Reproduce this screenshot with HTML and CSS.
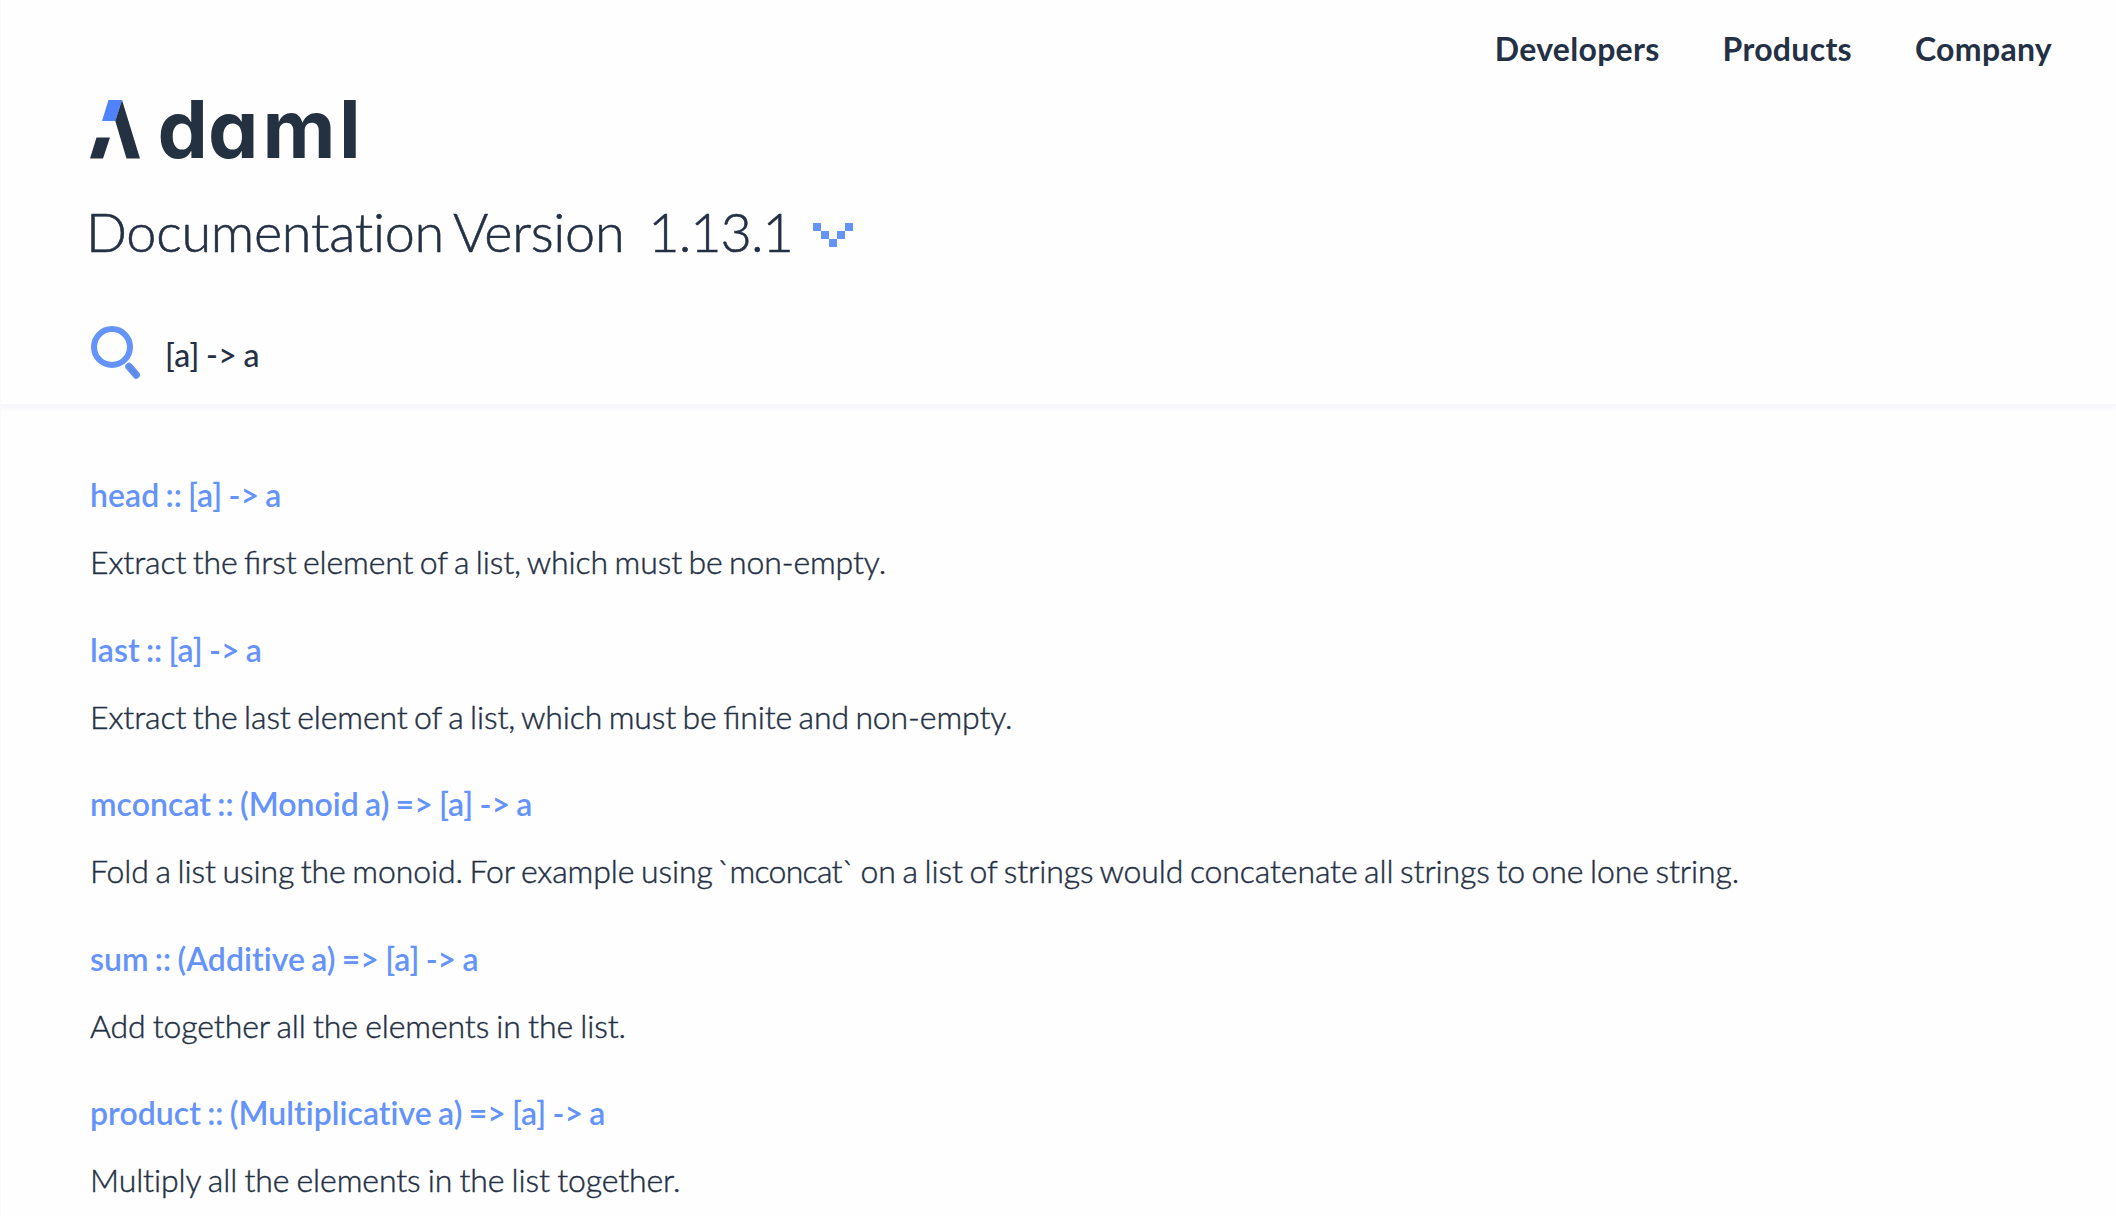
FILE: index.html
```html
<!DOCTYPE html>
<html lang="en">
<head>
<meta charset="utf-8">
<title>Daml Documentation</title>
<link rel="stylesheet" href="styles.css">
</head>
<body>
<div class="page">
  <header class="header">
    <nav class="nav">
      <a class="nav-link">Developers</a>
      <a class="nav-link">Products</a>
      <a class="nav-link">Company</a>
    </nav>
    <svg class="logo" viewBox="0 0 280 100" role="img" aria-label="daml">
      <path fill="#4f82fc" d="M18.5 20H32L25.3 41H12z"/>
      <path fill="#243141" d="M6.5 57.5H20L13 78.5H0zM32 20L50 78.5H36.5L25.3 41z"/>
      <text class="wordmark" y="78.3" x="67.5 118 172.5 249">daml</text>
    </svg>
    <div class="title-row">
      <h1 class="title">Documentation Version</h1>
      <span class="version">1.13.1</span>
      <svg class="chevron" viewBox="0 0 40 24" shape-rendering="crispEdges">
        <path fill="#6493fb" d="M0 0h8v8H0zM8 8h8v8H8zM16 16h8v8h-8zM24 8h8v8h-8zM32 0h8v8h-8z"/>
      </svg>
    </div>
    <div class="search">
      <svg class="search-icon" viewBox="0 0 52 56" fill="none">
        <circle cx="22" cy="22" r="18" stroke="#6493fb" stroke-width="6"/>
        <path d="M39 41.5L46.3 50" stroke="#6493fb" stroke-width="7.5" stroke-linecap="round"/>
        <path d="M39 41.5L46.3 50" stroke="#5e8be4" stroke-width="4.5" stroke-linecap="round"/>
      </svg>
      <span class="query">[a] -&gt; a</span>
    </div>
  </header>
  <main class="results">
    <article class="result"><a class="signature">head :: [a] -&gt; a</a><p class="description ligatures">Extract the first element of a list, which must be non-empty.</p></article>
    <article class="result"><a class="signature">last :: [a] -&gt; a</a><p class="description ligatures">Extract the last element of a list, which must be finite and non-empty.</p></article>
    <article class="result"><a class="signature">mconcat :: (Monoid a) =&gt; [a] -&gt; a</a><p class="description">Fold a list using the monoid. For example using <span class="code">`mconcat`</span> on a list of strings would concatenate all strings to one lone string.</p></article>
    <article class="result"><a class="signature">sum :: (Additive a) =&gt; [a] -&gt; a</a><p class="description loose">Add together all the elements in the list.</p></article>
    <article class="result"><a class="signature">product :: (Multiplicative a) =&gt; [a] -&gt; a</a><p class="description loose">Multiply all the elements in the list together.</p></article>
  </main>
</div>
</body>
</html>
```
FILE: styles.css
```css
* { box-sizing: border-box; }
body {
  margin: 0;
  height: 1216px;
  overflow: hidden;
  background: #fefefe;
  color: #243044;
  font-family: Lato, sans-serif;
  font-size: 32px;
}
.page { border-left: 1px solid #fafafb; height: 1216px; }
.header {
  height: 404px;
  padding-left: 89px;
  display: flex;
  flex-direction: column;
  align-items: flex-start;
}
.nav {
  align-self: stretch;
  height: 80px;
  padding: 29px 64px 0 0;
  display: flex;
  justify-content: flex-end;
  gap: 63px;
}
.nav-link {
  font-weight: 700;
  line-height: 40px;
  height: 40px;
  letter-spacing: 0.3px;
}
.logo { width: 280px; height: 100px; display: block; }
.wordmark {
  font-family: Inter, sans-serif;
  font-feature-settings: "cv11";
  font-weight: 700;
  font-size: 80px;
  fill: #243141;
}
.title-row { display: flex; height: 90px; padding-top: 19px; margin-left: -4px; }
.title, .version {
  margin: 0;
  font-size: 54px;
  font-weight: 300;
  line-height: 66px;
  white-space: nowrap;
  -webkit-text-stroke: 0.6px #243044;
}
.title { letter-spacing: -0.28px; word-spacing: -3.5px; }
.version { margin-left: 24px; letter-spacing: -1px; }
.chevron { width: 40px; height: 24px; margin: 24px 0 0 20px; }
.search { display: flex; height: 134px; padding-top: 55px; }
.search-icon { width: 52px; height: 56px; }
.query {
  margin-left: 23px;
  line-height: 40px;
  padding-top: 10px;
  font-weight: 500;
  letter-spacing: 0.3px;
  word-spacing: -2px;
}
.results {
  padding: 71px 89px 0;
  background: linear-gradient(#f7f7fc, #fafafd 4px, #fefefe 9px);
}
.result { height: 154.5px; }
.signature {
  display: block;
  color: #6493fb;
  font-weight: 600;
  line-height: 40px;
  letter-spacing: 0.04px;
  word-spacing: -1.75px;
}
.description {
  margin: 27px 0 0;
  font-weight: 300;
  line-height: 40px;
  letter-spacing: -0.11px;
  word-spacing: -1.95px;
  white-space: nowrap;
  -webkit-text-stroke: 0.45px #243044;
}
.ligatures { font-feature-settings: "liga" 1; word-spacing: -2.15px; }
.loose { word-spacing: -1.35px; }
.code { margin-left: -2px; letter-spacing: -0.7px; }
```
